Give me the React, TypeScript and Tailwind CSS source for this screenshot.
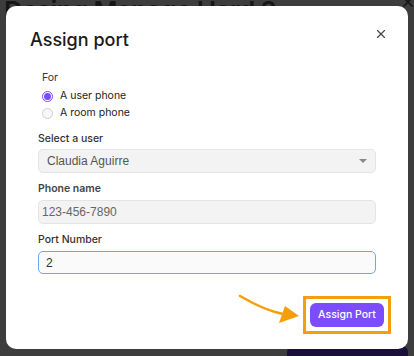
import { X } from "lucide-react";

function App() {
  return (
    <div className="relative h-[356px] w-[414px] overflow-hidden bg-[#3d3d3d] font-['Inter',sans-serif]">
      {/* page underneath the overlay */}
      <div className="absolute left-[4px] top-[-9px] text-[26px] font-semibold tracking-tight text-[#161616]">
        Desing Manage Hard 2
      </div>
      <X className="absolute right-[-2px] top-[-6px] h-[16px] w-[16px] text-[#161616]" strokeWidth={2.5} />
      <div className="absolute bottom-[-10px] left-[287px] h-[20px] w-[121px] rounded-[6px] bg-[#1a0f3a]" />

      <div className="relative mx-[6px] mt-[6px] h-[343px] rounded-[10px] bg-white px-[24px] pt-[21px]">
        <div className="flex items-start justify-between">
          <h2 className="text-[18px] font-medium leading-[26px] text-[#1a1a1a]">Assign port</h2>
          <X className="mr-[-4px] mt-[0px] h-[14px] w-[14px] text-[#444]" strokeWidth={2} />
        </div>

        <div className="px-[8px]">
          <div className="ml-[4px] mt-[18px] text-[10.5px] leading-[14px] text-[#333]">For</div>
          <div className="ml-[4px] mt-[4px] flex flex-col gap-[3px]">
            <label className="flex items-center gap-[7px] text-[10.5px] leading-[14px] text-[#222]">
              <span className="flex h-[11px] w-[11px] items-center justify-center rounded-full border border-[#7c4dff] bg-white">
                <span className="h-[7px] w-[7px] rounded-full bg-[#7c4dff]" />
              </span>
              A user phone
            </label>
            <label className="flex items-center gap-[7px] text-[10.5px] leading-[14px] text-[#222]">
              <span className="h-[11px] w-[11px] rounded-full border border-[#cfcfcf] bg-[#f7f7f7]" />
              A room phone
            </label>
          </div>

          <div className="mt-[12px] text-[10.5px] font-medium leading-[14px] text-[#333]">Select a user</div>
          <div className="mt-[3px] flex h-[24px] items-center justify-between rounded-[5px] border border-[#e4e4e4] bg-[#f3f3f3] pl-[8px] pr-[8px]">
            <span className="font-['Liberation_Sans',sans-serif] text-[12px] text-[#555]">Claudia Aguirre</span>
            <span className="h-0 w-0 border-x-[4px] border-t-[4px] border-x-transparent border-t-[#888]" />
          </div>

          <div className="mt-[9px] text-[10.5px] font-semibold leading-[14px] text-[#444]">Phone name</div>
          <div className="mt-[4px] flex h-[24px] items-center rounded-[5px] border border-[#e4e4e4] bg-[#f3f3f3] pl-[3px]">
            <span className="font-['Liberation_Sans',sans-serif] text-[12px] text-[#666]">123-456-7890</span>
          </div>

          <div className="mt-[9px] text-[10.5px] font-medium leading-[14px] text-[#333]">Port Number</div>
          <div className="mt-[4px] flex h-[23px] items-center rounded-[5px] border-[1.5px] border-[#6aa8f0] bg-[#fafafa] pl-[7px]">
            <span className="font-['Liberation_Sans',sans-serif] text-[12px] text-[#333]">2</span>
          </div>
        </div>

        <div className="-mr-[7px] mt-[22px] flex items-start justify-end">
          <svg width="64" height="34" viewBox="0 0 64 34" className="-mt-[3px] mr-[2px]">
            <path d="M3 3 C 15 10, 30 18, 46 21" fill="none" stroke="#f59e0b" strokeWidth="2.5" strokeLinecap="round" />
            <path d="M48 13 L62 23 L42 30 Z" fill="#f59e0b" />
          </svg>
          <div className="border-[3px] border-[#f59e0b] p-[4px]">
            <button className="block h-[24px] w-[74px] rounded-[6px] bg-[#7b4dff] text-[10.5px] font-medium leading-[24px] text-white">
              Assign Port
            </button>
          </div>
        </div>
      </div>
    </div>
  );
}

export default App;
